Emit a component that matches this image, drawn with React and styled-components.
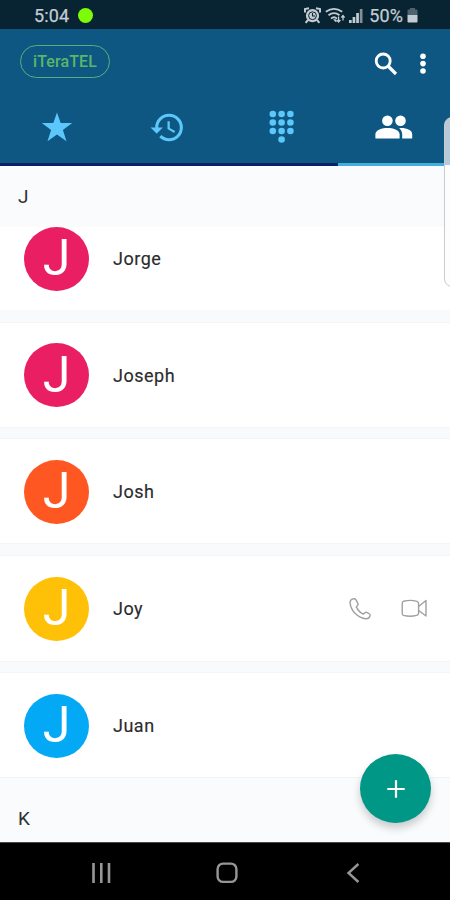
import React from 'react';
import styled, { createGlobalStyle } from 'styled-components';

const GlobalStyle = createGlobalStyle`
  * { box-sizing: border-box; }
  body { margin: 0; background: #fff; font-family: Roboto, "Liberation Sans", sans-serif; }
  svg { display: block; flex: none; }
`;

const Screen = styled.div`
  position: relative;
  width: 450px;
  height: 900px;
  overflow: hidden;
  display: flex;
  flex-direction: column;
  background: #fff;
`;

const StatusBar = styled.header`
  height: 29px;
  flex: none;
  display: flex;
  align-items: center;
  padding: 2px 32px 0 34px;
  background: #082332;
  color: #c3ccd2;
  font-size: 18px;
`;

const Clock = styled.span`
  width: 44px;
  letter-spacing: 0.1px;
  -webkit-text-stroke: 0.25px currentColor;
`;

const ActiveDot = styled.span`
  width: 15px;
  height: 15px;
  border-radius: 50%;
  background: #7cfc08;
`;

const StatusIcons = styled.div`
  margin-left: auto;
  display: flex;
  align-items: center;
  gap: 4px;
`;

const Battery = styled.span`
  margin-left: 2px;
  letter-spacing: 0.1px;
  -webkit-text-stroke: 0.25px currentColor;
`;

const AppBar = styled.div`
  height: 65px;
  flex: none;
  display: flex;
  align-items: center;
  padding: 0 12px 0 20px;
  background: #0f5783;
`;

const Brand = styled.div`
  width: 90px;
  height: 33px;
  border: 1.5px solid #55b179;
  border-radius: 17px;
  display: flex;
  align-items: center;
  justify-content: center;
  color: #58b868;
  font-size: 16px;
  font-weight: 500;
  letter-spacing: 0.1px;
`;

const Actions = styled.div`
  margin-left: auto;
  display: flex;
  align-items: center;
  gap: 9px;
  padding-top: 4px;
`;

const Tabs = styled.nav`
  height: 72px;
  flex: none;
  display: grid;
  grid-template-columns: 113px 112px 113px 112px;
  background: #0f5783;
`;

const Tab = styled.div`
  display: flex;
  justify-content: center;
  align-items: center;
  padding-bottom: 3px;
  color: ${p => (p.$active ? '#fff' : '#5bc7fa')};
  border-bottom: 3px solid ${p => (p.$active ? '#43ade0' : '#07216a')};
`;

const SectionHeader = styled.div`
  height: ${p => p.$height}px;
  flex: none;
  display: flex;
  align-items: center;
  padding: ${p => p.$offset}px 0 0 18px;
  background: #fafbfd;
  border-top: ${p => (p.$line ? '1px solid #f2f3f5' : '0')};
  color: #303134;
  font-size: 19px;
`;

const ContactList = styled.main`
  flex: none;
  height: 550px;
  display: grid;
  grid-template-rows: 83px 104px 104px 105px 104px;
  row-gap: 12.5px;
  background: #f9fafc;
`;

const ContactRow = styled.article`
  display: flex;
  align-items: center;
  padding: 1px 22px 0 24px;
  background: #fff;
  ${p => p.$clipped ? 'padding-bottom: 21px;' : 'box-shadow: 0 0 1px rgba(30, 50, 80, 0.14);'}
`;

const Avatar = styled.div`
  width: 65px;
  height: 64px;
  flex: none;
  border-radius: 50%;
  display: flex;
  align-items: center;
  justify-content: center;
  background: ${p => p.$color};
  color: #fff;
  font-size: 50px;
  line-height: 65px;
`;

const Name = styled.span`
  margin-left: 24px;
  color: #2b2b2d;
  font-size: 18px;
  letter-spacing: 0.5px;
  -webkit-text-stroke: 0.15px #2b2b2d;
`;

const CallActions = styled.div`
  margin-left: auto;
  display: flex;
  align-items: center;
  gap: 30px;
  color: #a0a0a0;
`;

const NavBar = styled.footer`
  flex: 1;
  display: grid;
  grid-template-columns: 126px 126px 126px;
  justify-content: center;
  padding: 3px 0 0 4px;
  border-top: 1px solid #4a4a4a;
  background: #000;
  color: #969696;
`;

const NavButton = styled.div`
  display: flex;
  align-items: center;
  justify-content: center;
`;

const AddButton = styled.button`
  position: absolute;
  right: 19px;
  top: 754px;
  width: 71px;
  height: 69px;
  padding: 0;
  border: 0;
  border-radius: 50%;
  display: flex;
  align-items: center;
  justify-content: center;
  background: #009787;
  color: #fff;
  box-shadow: 0 5px 8px rgba(0, 0, 0, 0.2);
`;

const EdgePanel = styled.div`
  position: absolute;
  left: 444px;
  top: 117px;
  width: 16px;
  height: 170px;
  border: 1.5px solid #c8cbd0;
  border-radius: 8px;
  background: linear-gradient(#b8cad9 0 47px, #fdfdfe 47px);
`;

const AlarmIcon = () => (
  <svg width="17" height="17" viewBox="0 0 17 17">
    <circle cx="8.5" cy="8.7" r="6.6" fill="currentColor" />
    <path d="M1 5.5V2l4-.8M16 5.5V2l-4-.8M4 13l-2.4 2.8M13 13l2.4 2.8" fill="none" stroke="currentColor" strokeWidth="2" />
    <circle cx="8.5" cy="8.7" r="3.9" fill="none" stroke="#082332" strokeWidth="1" />
    <path d="M8.5 6v3h2.5" fill="none" stroke="#082332" strokeWidth="1.1" />
  </svg>
);

const WifiIcon = () => (
  <svg width="20" height="17" viewBox="0 0 20 17" fill="none" stroke="currentColor" strokeWidth="1.8">
    <path d="M.8 4.8Q9 -1.2 17.2 4.8M3.5 8.3Q9 4 14.5 8.3M6 11.6Q9 9 12 11.6" />
    <path d="M8 12.2h3l1 2.3-1.5.5z" fill="currentColor" stroke="none" />
    <path d="M13.6 9.5V15m-1.8-2 1.8 2 1.8-2M18 13.5V8.5m-1.6 2L18 8.5l1.6 2" strokeWidth="1.3" />
  </svg>
);

const SignalIcon = () => (
  <svg width="14" height="16" viewBox="0 0 14 16" fill="currentColor">
    <path d="M0 12h2.7v3H0zM3.6 9h2.7v6H3.6zM7.2 5h2.7v10H7.2z" />
    <path d="M10.8 1h2.7v14h-2.7z" opacity=".65" />
  </svg>
);

const BatteryIcon = () => (
  <svg width="11" height="15" viewBox="0 0 11 15" fill="currentColor">
    <path d="M3 0h5v1.5h1.5q1 0 1 1V7H.5V2.500q0-1 1-1H3z" opacity=".38" />
    <path d="M.5 7h10v6.5q0 1-1 1h-8q-1 0-1-1z" />
  </svg>
);

const SearchIcon = () => (
  <svg width="26" height="26" viewBox="0 0 26 26" fill="none" stroke="#fff" strokeWidth="2.8">
    <circle cx="10.2" cy="10" r="7" />
    <path d="M15 15l8 8" strokeWidth="3.2" />
  </svg>
);

const MoreIcon = () => (
  <svg width="30" height="26" viewBox="0 0 30 26" fill="#fff">
    <circle cx="15" cy="5.2" r="2.8" />
    <circle cx="15" cy="12.6" r="2.8" />
    <circle cx="15" cy="20" r="2.8" />
  </svg>
);

const StarIcon = () => (
  <svg width="32" height="30" viewBox="0 0 32 30" fill="currentColor">
    <path d="M16 0.5l3.7 10.6h11.5l-9.3 7 3.6 11.2L16 22.5l-9.5 6.8 3.6-11.2-9.3-7h11.5z" />
  </svg>
);

const HistoryIcon = () => (
  <svg width="41" height="37" viewBox="0 0 26.6 24" fill="currentColor">
    <path d="M13 3a9 9 0 0 0-9 9H1l3.89 3.89.07.14L9 12H6c0-3.87 3.13-7 7-7s7 3.13 7 7-3.13 7-7 7c-1.93 0-3.68-.79-4.94-2.06l-1.42 1.42A8.95 8.95 0 0 0 13 21a9 9 0 0 0 0-18zm-1 5v5l4.28 2.54.72-1.21-3.5-2.08V8H12z" />
  </svg>
);

const DIAL_DOTS = [[0, 0], [1, 0], [2, 0], [0, 1], [1, 1], [2, 1], [0, 2], [1, 2], [2, 2], [1, 3]];

const DialpadIcon = () => (
  <svg width="26" height="34" viewBox="0 0 26 34" fill="currentColor">
    {DIAL_DOTS.map(([c, r]) => (
      <circle key={`${c}-${r}`} cx={3.8 + c * 8.8} cy={4 + r * 8.5} r="3.3" />
    ))}
  </svg>
);

const PeopleIcon = () => (
  <svg width="38" height="24" viewBox="0 0 38 24" fill="currentColor">
    <circle cx="12.4" cy="5.8" r="5.3" />
    <circle cx="25.500" cy="5.8" r="5.3" />
    <path d="M.4 23.500v-4.300c0-4.300 7-6.200 12.100-6.200s12.100 1.900 12.100 6.200v4.300z" />
    <path d="M24.200 13.200c6.800-.6 13 1.900 13 6v4.300H27.200v-4.300c0-2.500-1.200-4.500-3-6z" />
  </svg>
);

const PhoneIcon = () => (
  <svg width="22" height="22" viewBox="0 0 24 24" fill="none" stroke="currentColor" strokeWidth="1.5" strokeLinejoin="round">
    <path d="M4.300 1C2.300 1.500 1 3.100 1.200 5.300c.7 8.600 8.600 16.600 17.200 17.300 2 .1 3.900-1.100 4.500-3 .3-1-.1-1.800-.9-2.400l-2.200-1.300c-.9-.5-1.700-.4-2.500.2l-1.700 1.500c-3.300-1.600-6.100-4.500-7.600-7.900l1.300-1.600c.7-.8.7-1.700.2-2.500L7.700 2C7 1 5.600.7 4.300 1z" />
  </svg>
);

const VideoIcon = () => (
  <svg width="27" height="20" viewBox="0 0 27 20" fill="none" stroke="currentColor" strokeWidth="1.4" strokeLinejoin="round">
    <path d="M2.500 2.300Q9.500.4 15.800 2.300 17.600 2.800 17.600 4.500v9.600q0 1.900-1.800 2.300-6.800 1.700-13.300 0Q1.200 16 1.200 13.700V4.700q0-2 1.300-2.400z" />
    <path d="M17.600 7.500 25 1.500v15.500l-7.400-5.500" />
  </svg>
);

const PlusIcon = () => (
  <svg width="18" height="18" viewBox="0 0 18 18" stroke="currentColor" strokeWidth="2.2">
    <path d="M9 .3v17.4M.3 9h17.4" />
  </svg>
);

const RecentsIcon = () => (
  <svg width="20" height="20" viewBox="0 0 20 20" stroke="currentColor" strokeWidth="2.6">
    <path d="M2.500 0v20M10.300 0v20M18 0v20" />
  </svg>
);

const HomeIcon = () => (
  <svg width="22" height="22" viewBox="0 0 22 22" fill="none" stroke="currentColor" strokeWidth="2.4">
    <rect x="1.6" y="1.6" width="18.8" height="18.3" rx="5.5" />
  </svg>
);

const BackIcon = () => (
  <svg width="14" height="20" viewBox="0 0 14 20" fill="none" stroke="currentColor" strokeWidth="2.4">
    <path d="M12.400 1 2.500 10l9.900 9" />
  </svg>
);

const CONTACTS = [
  { name: 'Jorge', color: '#e91e63', clipped: true },
  { name: 'Joseph', color: '#e91e63' },
  { name: 'Josh', color: '#ff5722' },
  { name: 'Joy', color: '#ffc107', callable: true },
  { name: 'Juan', color: '#03a9f4' },
];

export default function App() {
  return (
    <>
      <GlobalStyle />
      <Screen>
        <StatusBar>
          <Clock>5:04</Clock>
          <ActiveDot />
          <StatusIcons>
            <AlarmIcon />
            <WifiIcon />
            <SignalIcon />
            <Battery>50%</Battery>
            <BatteryIcon />
          </StatusIcons>
        </StatusBar>
        <AppBar>
          <Brand>iTeraTEL</Brand>
          <Actions>
            <SearchIcon />
            <MoreIcon />
          </Actions>
        </AppBar>
        <Tabs>
          <Tab><StarIcon /></Tab>
          <Tab><HistoryIcon /></Tab>
          <Tab><DialpadIcon /></Tab>
          <Tab $active><PeopleIcon /></Tab>
        </Tabs>
        <SectionHeader $height={61} $offset={0}>J</SectionHeader>
        <ContactList>
          {CONTACTS.map(c => (
            <ContactRow key={c.name} $clipped={c.clipped}>
              <Avatar $color={c.color}>J</Avatar>
              <Name>{c.name}</Name>
              {c.callable && (
                <CallActions>
                  <PhoneIcon />
                  <VideoIcon />
                </CallActions>
              )}
            </ContactRow>
          ))}
        </ContactList>
        <SectionHeader $height={65} $offset={16} $line>K</SectionHeader>
        <NavBar>
          <NavButton><RecentsIcon /></NavButton>
          <NavButton><HomeIcon /></NavButton>
          <NavButton><BackIcon /></NavButton>
        </NavBar>
        <EdgePanel />
        <AddButton aria-label="Add contact"><PlusIcon /></AddButton>
      </Screen>
    </>
  );
}
